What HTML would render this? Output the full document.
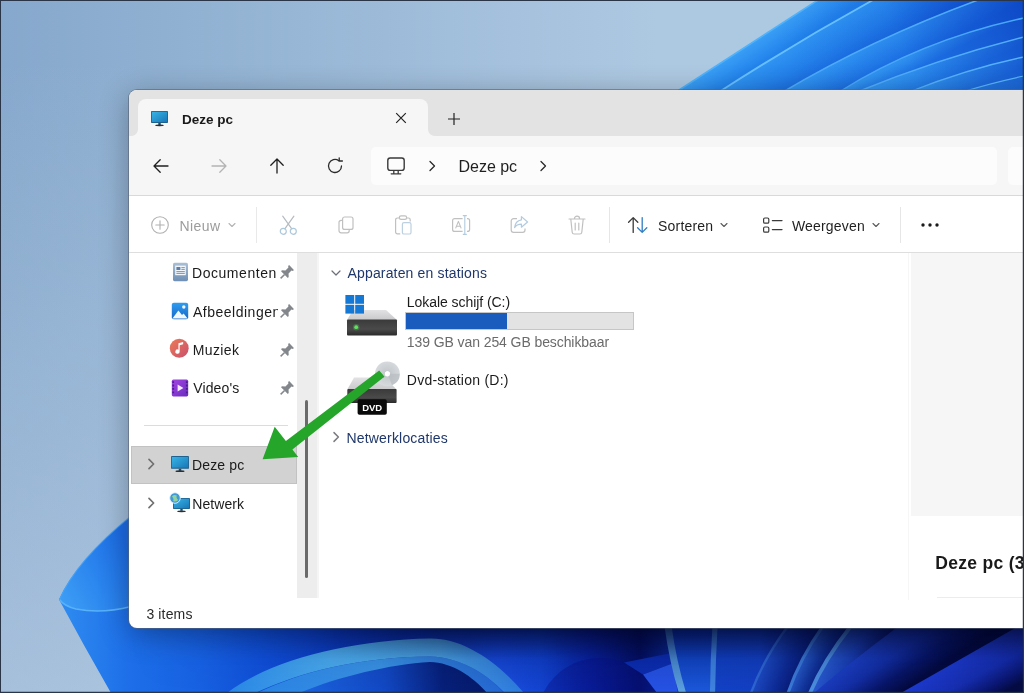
<!DOCTYPE html>
<html lang="nl">
<head>
<meta charset="utf-8">
<title>Deze pc</title>
<style>
html,body{margin:0;padding:0;}
body{width:1024px;height:693px;overflow:hidden;position:relative;background:#8fb0d2;font-family:"Liberation Sans",sans-serif;color:#1b1b1b;}
.abs{position:absolute;}
#wall{position:absolute;left:0;top:0;width:1024px;height:693px;}
#frame{position:absolute;left:0;top:0;width:1024px;height:693px;box-sizing:border-box;border:1px solid #2a3548;box-shadow:inset -1px -1px 0 rgba(30,40,60,.22);z-index:50;pointer-events:none;}
#win{position:absolute;left:129px;top:90px;width:920px;height:538px;background:#fff;border-radius:8px;overflow:hidden;box-shadow:0 0 0 1px rgba(90,100,115,.6),0 6px 30px rgba(0,0,10,.32);}
#titlebar{position:absolute;left:0;top:0;width:100%;height:46px;background:#e3e3e3;}
#tab{position:absolute;left:9px;top:9px;width:290px;height:39px;background:#f6f6f6;border-radius:8px 8px 0 0;}
#tab:before,#tab:after{content:"";position:absolute;bottom:2px;width:7px;height:7px;}
#tab:before{left:-7px;background:radial-gradient(circle at 0 0,rgba(246,246,246,0) 6.5px,#f6f6f6 7.5px);}
#tab:after{right:-7px;background:radial-gradient(circle at 100% 0,rgba(246,246,246,0) 6.5px,#f6f6f6 7.5px);}
#nav{position:absolute;left:0;top:46px;width:100%;height:59px;background:#f6f6f6;}
#addr{position:absolute;left:242px;top:57px;width:626px;height:38px;background:#fcfcfc;border-radius:5px;}
#search{position:absolute;left:879px;top:57px;width:60px;height:38px;background:#fcfcfc;border-radius:5px;}
#tool{position:absolute;left:0;top:105px;width:100%;height:58px;background:#fff;border-top:1px solid #d9d9d9;border-bottom:1px solid #dedede;box-sizing:border-box;}
#c{position:absolute;left:-129px;top:-90px;width:1024px;height:693px;will-change:transform;}
.t{position:absolute;white-space:nowrap;line-height:1;transform-origin:0 50%;}
</style>
</head>
<body>
<svg id="wall" width="1024" height="693" viewBox="0 0 1024 693">
<defs>
<linearGradient id="sky" x1="0" y1="0" x2="1" y2="0">
<stop offset="0" stop-color="#86a8cc"/><stop offset="0.3" stop-color="#98b7d6"/><stop offset="0.5" stop-color="#a5c1dd"/><stop offset="0.64" stop-color="#adc8e1"/><stop offset="1" stop-color="#adc8e1"/>
</linearGradient>
<linearGradient id="skyv" x1="0" y1="0" x2="0" y2="1">
<stop offset="0" stop-color="#7fa2c8" stop-opacity="0"/><stop offset="1" stop-color="#9fb6cc" stop-opacity="0.55"/>
</linearGradient>
<linearGradient id="leftv" gradientUnits="userSpaceOnUse" x1="0" y1="60" x2="0" y2="693">
<stop offset="0" stop-color="#c4d6ea" stop-opacity="0"/><stop offset="0.6" stop-color="#c4d6ea" stop-opacity="0.3"/><stop offset="1" stop-color="#c4d6ea" stop-opacity="0.52"/>
</linearGradient>
<linearGradient id="lp1" gradientUnits="userSpaceOnUse" x1="62" y1="598" x2="135" y2="560"><stop offset="0" stop-color="#3c9cf4"/><stop offset="0.5" stop-color="#2a84ee"/><stop offset="1" stop-color="#1d6ce4"/></linearGradient>
<linearGradient id="lp2" gradientUnits="userSpaceOnUse" x1="70" y1="606" x2="135" y2="690"><stop offset="0" stop-color="#2e8af0"/><stop offset="0.5" stop-color="#2074e6"/><stop offset="1" stop-color="#1a64de"/></linearGradient>
<linearGradient id="bot" gradientUnits="userSpaceOnUse" x1="59" y1="0" x2="1024" y2="0"><stop offset="0.0" stop-color="#2f8cf0"/><stop offset="0.0736" stop-color="#1d6ee8"/><stop offset="0.1461" stop-color="#1761e2"/><stop offset="0.2083" stop-color="#104fd6"/><stop offset="0.3016" stop-color="#0b38bc"/><stop offset="0.3948" stop-color="#0930a8"/><stop offset="0.457" stop-color="#0f3ed0"/><stop offset="0.4984" stop-color="#1040cc"/><stop offset="0.5503" stop-color="#0a22a0"/><stop offset="0.6021" stop-color="#050f62"/><stop offset="0.6311" stop-color="#0a2690"/><stop offset="0.6642" stop-color="#1243c8"/><stop offset="0.7264" stop-color="#1340c4"/><stop offset="0.7575" stop-color="#0a2590"/><stop offset="1.0" stop-color="#061a70"/></linearGradient>

<linearGradient id="botv" gradientUnits="userSpaceOnUse" x1="0" y1="626" x2="0" y2="693"><stop offset="0" stop-color="#01062e" stop-opacity="0.7"/><stop offset="0.5" stop-color="#01062e" stop-opacity="0.12"/><stop offset="1" stop-color="#01062e" stop-opacity="0"/></linearGradient>
<linearGradient id="botvm" gradientUnits="userSpaceOnUse" x1="129" y1="0" x2="1024" y2="0"><stop offset="0" stop-color="#fff" stop-opacity="0"/><stop offset="0.2" stop-color="#fff" stop-opacity="0.35"/><stop offset="0.38" stop-color="#fff" stop-opacity="1"/><stop offset="1" stop-color="#fff" stop-opacity="1"/></linearGradient>
<mask id="mbv"><rect x="0" y="600" width="1024" height="93" fill="url(#botvm)"/></mask>
<linearGradient id="arc1" gradientUnits="userSpaceOnUse" x1="229" y1="0" x2="523" y2="0"><stop offset="0" stop-color="#2a88e6"/><stop offset="0.35" stop-color="#49a8ea"/><stop offset="0.72" stop-color="#4ba4e6"/><stop offset="1" stop-color="#2c7ade"/></linearGradient>
<linearGradient id="arc2" gradientUnits="userSpaceOnUse" x1="257" y1="0" x2="504" y2="0"><stop offset="0" stop-color="#2a84e4"/><stop offset="0.5" stop-color="#3a92e4"/><stop offset="1" stop-color="#2468d4"/></linearGradient>
<linearGradient id="arc3" gradientUnits="userSpaceOnUse" x1="300" y1="0" x2="490" y2="0"><stop offset="0" stop-color="#1b64de"/><stop offset="0.45" stop-color="#1248c4"/><stop offset="0.75" stop-color="#07207a"/><stop offset="1" stop-color="#061a6a"/></linearGradient>
<radialGradient id="arcglow" gradientUnits="userSpaceOnUse" cx="475" cy="705" r="105"><stop offset="0" stop-color="#2a66f0" stop-opacity="0.9"/><stop offset="0.5" stop-color="#1c50e0" stop-opacity="0.55"/><stop offset="1" stop-color="#1040d0" stop-opacity="0"/></radialGradient>
<linearGradient id="vp" gradientUnits="userSpaceOnUse" x1="0" y1="628" x2="0" y2="693"><stop offset="0" stop-color="#0c36b8"/><stop offset="1" stop-color="#1b5adc"/></linearGradient>
<linearGradient id="vl1" gradientUnits="userSpaceOnUse" x1="0" y1="628" x2="0" y2="693"><stop offset="0" stop-color="#3a76c8"/><stop offset="1" stop-color="#5ea4e2"/></linearGradient>
<linearGradient id="fa" gradientUnits="userSpaceOnUse" x1="765" y1="655" x2="800" y2="672"><stop offset="0" stop-color="#1f50cc"/><stop offset="0.6" stop-color="#0e2c98"/><stop offset="1" stop-color="#071a74"/></linearGradient>
<linearGradient id="fb" gradientUnits="userSpaceOnUse" x1="802" y1="655" x2="826" y2="668"><stop offset="0" stop-color="#2c64d4"/><stop offset="0.6" stop-color="#12369e"/><stop offset="1" stop-color="#081e7c"/></linearGradient>
<linearGradient id="fc" gradientUnits="userSpaceOnUse" x1="828" y1="655" x2="866" y2="676"><stop offset="0" stop-color="#2a5ed2"/><stop offset="0.5" stop-color="#1a40b8"/><stop offset="1" stop-color="#0a1a70"/></linearGradient>
<linearGradient id="fd" gradientUnits="userSpaceOnUse" x1="864" y1="653.6" x2="892.6" y2="696.8"><stop offset="0" stop-color="#1c40c6"/><stop offset="0.35" stop-color="#1430a8"/><stop offset="0.7" stop-color="#08166a"/><stop offset="1" stop-color="#040a40"/></linearGradient>
<linearGradient id="fe" gradientUnits="userSpaceOnUse" x1="960" y1="660" x2="984" y2="703"><stop offset="0" stop-color="#1d3ace"/><stop offset="0.45" stop-color="#162eb0"/><stop offset="0.8" stop-color="#0a1670"/><stop offset="1" stop-color="#050c44"/></linearGradient>
<linearGradient id="p1" gradientUnits="userSpaceOnUse" x1="728.6" y1="57.3" x2="742" y2="78"><stop offset="0" stop-color="#3a9ff5"/><stop offset="0.5" stop-color="#2d90f1"/><stop offset="1" stop-color="#207fe9"/></linearGradient><linearGradient id="p2" gradientUnits="userSpaceOnUse" x1="800" y1="42" x2="824" y2="84"><stop offset="0" stop-color="#3095f3"/><stop offset="0.45" stop-color="#2380ea"/><stop offset="1" stop-color="#155fd8"/></linearGradient><linearGradient id="p3" gradientUnits="userSpaceOnUse" x1="870" y1="44.6" x2="884" y2="72"><stop offset="0" stop-color="#3298f4"/><stop offset="0.5" stop-color="#2683ec"/><stop offset="1" stop-color="#1a6de2"/></linearGradient><linearGradient id="p4" gradientUnits="userSpaceOnUse" x1="900" y1="62" x2="906" y2="74"><stop offset="0" stop-color="#3399f4"/><stop offset="1" stop-color="#2079e8"/></linearGradient><linearGradient id="p5" gradientUnits="userSpaceOnUse" x1="940" y1="60" x2="948" y2="78"><stop offset="0" stop-color="#349bf5"/><stop offset="1" stop-color="#2380ea"/></linearGradient><linearGradient id="p6" gradientUnits="userSpaceOnUse" x1="973" y1="69" x2="979" y2="85"><stop offset="0" stop-color="#359df5"/><stop offset="1" stop-color="#2785ec"/></linearGradient><linearGradient id="plen" gradientUnits="userSpaceOnUse" x1="800" y1="95" x2="1030" y2="-5"><stop offset="0" stop-color="#0a3fc4" stop-opacity="0"/><stop offset="0.45" stop-color="#0a3fc4" stop-opacity="0.12"/><stop offset="0.8" stop-color="#0a3cc0" stop-opacity="0.5"/><stop offset="1" stop-color="#0838b8" stop-opacity="0.72"/></linearGradient>
</defs>
<rect width="1024" height="693" fill="url(#sky)"/>
<rect x="0" y="60" width="140" height="633" fill="url(#leftv)"/>
<!-- top-right petals -->
<path d="M676 92 Q745 47 818 0 L1024 0 L1024 92 Z" fill="url(#p1)"/>
<path d="M719 92 Q795 43 873 0 L1024 0 L1024 92 Z" fill="url(#p2)"/>
<path d="M783 92 Q870 40 978 0 L1024 0 L1024 92 Z" fill="url(#p3)"/>
<path d="M839 92 Q922 40 1024 18 L1024 92 Z" fill="url(#p4)"/>
<path d="M857 92 Q940 58 1024 37 L1024 92 Z" fill="url(#p5)"/>
<path d="M909 92 Q970 68 1024 57 L1024 92 Z" fill="url(#p6)"/>
<path d="M962 92 Q995 82 1024 76 L1024 92 Z" fill="#3097f3"/>
<path d="M676 92 Q745 47 818 0 L1024 0 L1024 92 Z" fill="url(#plen)"/>
<path d="M676 92 Q745 47 818 0" fill="none" stroke="#4fb2fb" stroke-width="1.6"/>
<path d="M719 92 Q795 43 873 0" fill="none" stroke="#66c0ff" stroke-width="1.8"/>
<path d="M783 92 Q870 40 978 0" fill="none" stroke="#4eacfb" stroke-width="1.5"/>
<path d="M839 92 Q922 40 1024 18" fill="none" stroke="#4aa8fa" stroke-width="1.4"/>
<path d="M857 92 Q940 58 1024 37" fill="none" stroke="#52aefb" stroke-width="1.4"/>
<path d="M909 92 Q970 68 1024 57" fill="none" stroke="#56b2fc" stroke-width="1.3"/>
<path d="M962 92 Q995 82 1024 76" fill="none" stroke="#5ab6fc" stroke-width="1.2"/>
<!-- bottom base -->
<path d="M131 516 Q76.6 560.2 59 599.5 Q84 646 111 693 L1024 693 L1024 600 L131 600 Z" fill="url(#bot)"/>
<!-- left petal inner -->
<path d="M131 516 Q76.6 560.2 59 599.5 Q64 606 76 609 Q102 614 131 606.5 Z" fill="url(#lp1)"/>
<path d="M59.5 599.5 Q64 606 76 609 Q102 614 131 606.5" fill="none" stroke="#58b2fa" stroke-width="1.6"/>
<path d="M131 516 Q76.6 560.2 59.5 599.5" fill="none" stroke="#4aa6f8" stroke-width="1.1" opacity="0.7"/>
<!-- glow right of arc -->
<rect x="380" y="626" width="260" height="67" fill="url(#arcglow)"/>
<!-- arc bands -->
<path d="M257 693 C300 672 360 657 430 656.5 C458 657 485 672 504 693 Z" fill="url(#arc2)"/>
<path d="M299 693 C340 676 390 664.5 430 662 C452 662.5 472 676 487 693 Z" fill="url(#arc3)"/>
<path d="M227 693 C270 660 350 640 430 638.5 C462 638 496 660 524 693 L505 693 C485 672 458 657 430 656.5 C360 657 300 672 255 693 Z" fill="url(#arc1)"/>
<!-- patches -->
<circle cx="600" cy="722" r="64" fill="#07128a" opacity="0.4"/>
<path d="M624 662.5 L669 653.5 L672 664 L643 674.5 Z" fill="#0d2eb4"/>
<path d="M643 674.5 L672.5 663.5 L678 693 L657 693 Z" fill="#2653e6"/>
<!-- vertical petals -->
<path d="M669 626 L713 626 L710 693 L683 693 Z" fill="url(#vp)"/>
<path d="M668 626 Q673 662 682.5 693" fill="none" stroke="url(#vl1)" stroke-width="7"/>
<path d="M715 626 Q713 660 712.5 693" fill="none" stroke="#3f84e2" stroke-width="5.2"/>
<!-- fan -->
<path d="M788 626 Q764 658 751 693 L790 693 Q800 658 823 626 Z" fill="url(#fa)"/>
<path d="M788 626 Q764 658 751 693" fill="none" stroke="#2e66d4" stroke-width="2.4"/>
<path d="M823 626 Q800 658 788 693 L812 693 Q824 660 851 626 Z" fill="url(#fb)"/>
<path d="M823 626 Q800 658 788 693" fill="none" stroke="#3b7ad8" stroke-width="3"/>
<path d="M851 626 Q824 660 810 693 L816 693 Q850 662 899 626 Z" fill="url(#fc)"/>
<path d="M851 626 Q824 660 810 693" fill="none" stroke="#4b8ee0" stroke-width="3.8"/>
<path d="M899 626 Q850 662 814 693 L903 693 L1019 626 Z" fill="url(#fd)"/>
<path d="M901 693 L1019 626 L1024 626 L1024 693 Z" fill="url(#fe)"/>
<!-- top darkening -->
<rect x="129" y="626" width="895" height="67" fill="url(#botv)" mask="url(#mbv)"/>
</svg>

<div id="win">
  <div id="titlebar"></div>
  <div id="tab"></div>
  <div id="nav"></div>
  <div id="addr"></div>
  <div id="search"></div>
  <div id="tool"></div>
<div id="c">
<!-- TAB -->
<svg class="abs" style="left:150px;top:110px" width="19" height="17" viewBox="0 0 19 17"><defs><linearGradient id="mon" x1="0" y1="0" x2="1" y2="1"><stop offset="0" stop-color="#38b4e6"/><stop offset="1" stop-color="#1878b8"/></linearGradient></defs><rect x="1" y="1" width="17" height="12" rx="0.8" fill="#1d5f8c"/><rect x="1.8" y="1.8" width="15.4" height="10.2" fill="url(#mon)"/><rect x="8.3" y="13" width="2.4" height="2" fill="#2a4a5e"/><ellipse cx="9.5" cy="15.3" rx="4.3" ry="0.9" fill="#22323c"/></svg>
<span class="t" id="t_tab" style="left:181.9px;top:112.77px;font-size:13.5px;font-weight:bold;color:#1a1a1a;letter-spacing:-0.002px">Deze pc</span>
<svg class="abs" style="left:395px;top:112px" width="12" height="12" viewBox="0 0 12 12"><path d="M1.2 1.2 L10.8 10.8 M10.8 1.2 L1.2 10.8" stroke="#222" stroke-width="1.2" fill="none"/></svg>
<svg class="abs" style="left:447px;top:112px" width="14" height="14" viewBox="0 0 14 14"><path d="M7 1 V13 M1 7 H13" stroke="#222" stroke-width="1.2" fill="none"/></svg>
<!-- NAV -->
<svg class="abs" style="left:152px;top:158px" width="18" height="16" viewBox="0 0 18 16"><path d="M16 8 H2.2 M8.2 1.8 L2 8 L8.2 14.2" stroke="#1f1f1f" stroke-width="1.3" fill="none" stroke-linecap="round" stroke-linejoin="round"/></svg>
<svg class="abs" style="left:210px;top:158px" width="18" height="16" viewBox="0 0 18 16"><path d="M2 8 H15.8 M9.8 1.8 L16 8 L9.8 14.2" stroke="#b4b4b4" stroke-width="1.3" fill="none" stroke-linecap="round" stroke-linejoin="round"/></svg>
<svg class="abs" style="left:269px;top:157px" width="16" height="18" viewBox="0 0 16 18"><path d="M8 16 V2.2 M1.8 8.2 L8 2 L14.2 8.2" stroke="#1f1f1f" stroke-width="1.3" fill="none" stroke-linecap="round" stroke-linejoin="round"/></svg>
<svg class="abs" style="left:326px;top:157px" width="18" height="18" viewBox="0 0 18 18"><path d="M15.5 9 A6.5 6.5 0 1 1 12.8 3.7" stroke="#2a2a2a" stroke-width="1.3" fill="none" stroke-linecap="round"/><path d="M12.6 1.2 V4.4 H15.8" stroke="#2a2a2a" stroke-width="1.3" fill="none" stroke-linecap="round" stroke-linejoin="round" transform="translate(0.6,-0.4)"/></svg>
<svg class="abs" style="left:386px;top:156px" width="20" height="20" viewBox="0 0 20 20"><rect x="1.8" y="2" width="16.4" height="12.4" rx="2.4" stroke="#3a3a3a" stroke-width="1.4" fill="none"/><path d="M7.8 14.6 V17.6 M12.2 14.6 V17.6 M5.2 17.8 H14.8" stroke="#3a3a3a" stroke-width="1.3" fill="none" stroke-linecap="round"/></svg>
<svg class="abs" style="left:427px;top:160px" width="10" height="12" viewBox="0 0 10 12"><path d="M3 1.5 L7.5 6 L3 10.5" stroke="#2a2a2a" stroke-width="1.3" fill="none" stroke-linecap="round" stroke-linejoin="round"/></svg>
<span class="t" id="t_bc" style="left:458.5px;top:158.66px;font-size:16px;color:#1f1f1f;letter-spacing:-0.016px">Deze pc</span>
<svg class="abs" style="left:538px;top:160px" width="10" height="12" viewBox="0 0 10 12"><path d="M3 1.5 L7.5 6 L3 10.5" stroke="#2a2a2a" stroke-width="1.3" fill="none" stroke-linecap="round" stroke-linejoin="round"/></svg>
<!-- TOOLBAR -->
<svg class="abs" style="left:149.6px;top:214.5px" width="20" height="20" viewBox="0 0 20 20"><circle cx="10" cy="10" r="8.3" stroke="#b0b0b0" stroke-width="1.1" fill="none"/><path d="M10 5.8 V14.2 M5.8 10 H14.2" stroke="#b0b0b0" stroke-width="1.1" fill="none" stroke-linecap="round"/></svg>
<span class="t" id="t_nieuw" style="left:179.6px;top:218.95px;font-size:14px;color:#9c9c9c;letter-spacing:0.377px">Nieuw</span>
<svg class="abs" style="left:227px;top:221px" width="10" height="8" viewBox="0 0 10 8"><path d="M2 2.5 L5 5.5 L8 2.5" stroke="#b4b4b4" stroke-width="1.1" fill="none" stroke-linecap="round" stroke-linejoin="round"/></svg>
<div class="abs" style="left:256px;top:207px;width:1px;height:36px;background:#e9e9e9"></div>
<!-- cut -->
<svg class="abs" style="left:279px;top:214px" width="20" height="22" viewBox="0 0 20 22"><path d="M3.7 2.2 L12.8 14.8 M14.9 2.2 L5.8 14.8" stroke="#b6bbc0" stroke-width="1.2" fill="none" stroke-linecap="round"/><circle cx="4.3" cy="17.3" r="3" stroke="#aec8dc" stroke-width="1.2" fill="none"/><circle cx="14.3" cy="17.3" r="3" stroke="#aec8dc" stroke-width="1.2" fill="none"/></svg>
<!-- copy -->
<svg class="abs" style="left:336px;top:215px" width="20" height="20" viewBox="0 0 20 20"><rect x="6.6" y="2" width="10.4" height="12.4" rx="2" stroke="#c0c0c0" stroke-width="1.2" fill="none"/><path d="M6.4 5.4 H5 A2 2 0 0 0 3 7.4 V15.6 A2.2 2.2 0 0 0 5.2 17.8 H11.2 A2 2 0 0 0 13.2 15.8 V14.6" stroke="#c0c0c0" stroke-width="1.2" fill="none"/></svg>
<!-- paste -->
<svg class="abs" style="left:393px;top:214px" width="20" height="22" viewBox="0 0 20 22"><path d="M6.2 4 H4.4 A1.8 1.8 0 0 0 2.6 5.8 V18 A1.8 1.8 0 0 0 4.4 19.8 H7.2" stroke="#c0c0c0" stroke-width="1.2" fill="none"/><path d="M13.6 4 H15.4 A1.8 1.8 0 0 1 17.2 5.8 V7.4" stroke="#c0c0c0" stroke-width="1.2" fill="none"/><rect x="6.4" y="1.8" width="7.2" height="3.6" rx="1.6" stroke="#c0c0c0" stroke-width="1.2" fill="none"/><rect x="9.4" y="8.6" width="8.6" height="11.4" rx="1.6" stroke="#bcd0e0" stroke-width="1.2" fill="none"/></svg>
<!-- rename -->
<svg class="abs" style="left:450px;top:214px" width="22" height="22" viewBox="0 0 22 22"><path d="M12.6 4.6 H4.6 A2 2 0 0 0 2.6 6.6 V15.4 A2 2 0 0 0 4.6 17.4 H12.6 M17 4.6 H17.6 A2 2 0 0 1 19.6 6.6 V15.4 A2 2 0 0 1 17.6 17.4 H17" stroke="#c0c0c0" stroke-width="1.2" fill="none"/><path d="M14.8 1.6 V20.4 M12.8 1.6 H16.8 M12.8 20.4 H16.8" stroke="#b2cbe0" stroke-width="1.1" fill="none"/><path d="M5.6 14.4 L8.4 7.4 L11.2 14.4 M6.5 12.2 H10.3" stroke="#c0c0c0" stroke-width="1.1" fill="none" stroke-linejoin="round"/></svg>
<!-- share -->
<svg class="abs" style="left:508px;top:214px" width="22" height="22" viewBox="0 0 22 22"><path d="M9 4.6 H5.6 A2.4 2.4 0 0 0 3.2 7 V16 A2.4 2.4 0 0 0 5.6 18.4 H14.6 A2.4 2.4 0 0 0 17 16 V14.6" stroke="#c0c0c0" stroke-width="1.2" fill="none"/><path d="M13.4 2.6 L19.6 8 L13.4 13.2 V10.2 C10 10.2 8 11.4 6.6 13.6 C7 9.6 9.4 6.4 13.4 5.8 Z" stroke="#b2cbe0" stroke-width="1.2" fill="none" stroke-linejoin="round"/></svg>
<!-- delete -->
<svg class="abs" style="left:567px;top:214px" width="20" height="22" viewBox="0 0 20 22"><path d="M2 5 H18 M7.4 4.8 A2.6 2.6 0 0 1 12.6 4.8 M3.8 5.2 L5.2 18.2 A2 2 0 0 0 7.2 20 H12.8 A2 2 0 0 0 14.8 18.2 L16.2 5.2 M8.2 9 V16 M11.8 9 V16" stroke="#c0c0c0" stroke-width="1.2" fill="none" stroke-linecap="round"/></svg>
<div class="abs" style="left:609px;top:207px;width:1px;height:36px;background:#e6e6e6"></div>
<!-- sort -->
<svg class="abs" style="left:627px;top:215px" width="22" height="20" viewBox="0 0 22 20"><path d="M6.2 17.4 V2.8 M1.6 7.2 L6.2 2.6 L10.8 7.2" stroke="#3a3a3a" stroke-width="1.3" fill="none" stroke-linecap="round" stroke-linejoin="round"/><path d="M15.2 2.6 V17.2 M10.6 12.8 L15.2 17.4 L19.8 12.8" stroke="#2f7dc4" stroke-width="1.3" fill="none" stroke-linecap="round" stroke-linejoin="round"/></svg>
<span class="t" id="t_sort" style="left:658.1px;top:219.05px;font-size:14px;color:#1f1f1f;letter-spacing:0.184px">Sorteren</span>
<svg class="abs" style="left:719px;top:221px" width="10" height="8" viewBox="0 0 10 8"><path d="M2 2.5 L5 5.5 L8 2.5" stroke="#5a5a5a" stroke-width="1.1" fill="none" stroke-linecap="round" stroke-linejoin="round"/></svg>
<!-- view -->
<svg class="abs" style="left:762px;top:215px" width="22" height="20" viewBox="0 0 22 20"><rect x="1.6" y="3" width="5.2" height="5.2" rx="1.3" stroke="#3a3a3a" stroke-width="1.2" fill="none"/><rect x="1.6" y="12" width="5.2" height="5.2" rx="1.3" stroke="#3a3a3a" stroke-width="1.2" fill="none"/><path d="M10.4 5.6 H20 M10.4 14.6 H20" stroke="#3a3a3a" stroke-width="1.3" fill="none" stroke-linecap="round"/></svg>
<span class="t" id="t_view" style="left:791.9px;top:219.05px;font-size:14px;color:#1f1f1f;letter-spacing:0.193px">Weergeven</span>
<svg class="abs" style="left:871px;top:221px" width="10" height="8" viewBox="0 0 10 8"><path d="M2 2.5 L5 5.5 L8 2.5" stroke="#5a5a5a" stroke-width="1.1" fill="none" stroke-linecap="round" stroke-linejoin="round"/></svg>
<div class="abs" style="left:900px;top:207px;width:1px;height:36px;background:#e6e6e6"></div>
<svg class="abs" style="left:919px;top:221px" width="22" height="8" viewBox="0 0 22 8"><circle cx="4" cy="4" r="1.7" fill="#1b1b1b"/><circle cx="11" cy="4" r="1.7" fill="#1b1b1b"/><circle cx="18" cy="4" r="1.7" fill="#1b1b1b"/></svg>

<!-- SIDEBAR -->
<div class="abs" style="left:297px;top:253px;width:20px;height:345px;background:#ededed;border-right:2px solid #f5f5f5"></div>
<div class="abs" style="left:305px;top:400px;width:3px;height:178px;background:#6a6a6a;border-radius:2px"></div>
<!-- documents icon -->
<svg class="abs" style="left:172px;top:262px" width="17" height="20" viewBox="0 0 17 20"><defs><linearGradient id="doc" x1="0" y1="0" x2="0" y2="1"><stop offset="0" stop-color="#a9bfd6"/><stop offset="1" stop-color="#6f8fb4"/></linearGradient></defs><rect x="1" y="0.8" width="15" height="18.4" rx="1.6" fill="url(#doc)"/><rect x="3.2" y="3.6" width="10.6" height="9.6" fill="#f3f7fb"/><rect x="4.4" y="5" width="4" height="3" fill="#5a7ea8"/><path d="M9.4 5.6 H12.8 M9.4 7.4 H12.8 M4.4 9.6 H12.8 M4.4 11.4 H12.8" stroke="#6a89ad" stroke-width="0.9"/></svg>
<span class="t" id="t_doc" style="left:192.0px;top:265.95px;font-size:14px;letter-spacing:0.545px">Documenten</span>
<svg class="abs" style="left:278px;top:265px" width="16" height="16" viewBox="0 0 16 16"><g transform="rotate(45 8 8)"><path d="M4.6 0.2 H11.4 V1.6 L10.2 2.4 V6.6 L12.8 9 V10.2 H3.2 V9 L5.8 6.6 V2.4 L4.6 1.6 Z" fill="#83878c"/><path d="M8 10 V15.6" stroke="#83878c" stroke-width="1.5"/></g></svg>
<!-- pictures icon -->
<svg class="abs" style="left:171px;top:302px" width="18" height="18" viewBox="0 0 18 18"><defs><linearGradient id="pic" x1="0" y1="0" x2="0" y2="1"><stop offset="0" stop-color="#2f9cf0"/><stop offset="1" stop-color="#1668c8"/></linearGradient></defs><rect x="0.8" y="0.8" width="16.4" height="16.4" rx="2" fill="url(#pic)"/><path d="M1.4 16.6 L7.4 8.4 L11 13 L12.6 11.4 L16.6 16.6 Z" fill="#f2f8ff"/><circle cx="12.8" cy="5" r="1.7" fill="#f2f8ff"/></svg>
<span class="t" id="t_afb" style="left:193.0px;top:304.65px;font-size:14px;width:84.5px;height:20px;overflow:hidden;letter-spacing:0.5px">Afbeeldingen</span>
<svg class="abs" style="left:278px;top:304px" width="16" height="16" viewBox="0 0 16 16"><g transform="rotate(45 8 8)"><path d="M4.6 0.2 H11.4 V1.6 L10.2 2.4 V6.6 L12.8 9 V10.2 H3.2 V9 L5.8 6.6 V2.4 L4.6 1.6 Z" fill="#83878c"/><path d="M8 10 V15.6" stroke="#83878c" stroke-width="1.5"/></g></svg>
<!-- music icon -->
<svg class="abs" style="left:169.2px;top:338.4px" width="20.5" height="20.5" viewBox="0 0 20 20"><defs><linearGradient id="mus" x1="0" y1="0" x2="1" y2="1"><stop offset="0" stop-color="#ec7a55"/><stop offset="1" stop-color="#c9506e"/></linearGradient></defs><circle cx="10" cy="10" r="9.2" fill="url(#mus)"/><path d="M9.2 5 L13.8 4 V6.2 L10.4 7 V13.2 A2.1 2.1 0 1 1 9.2 11.4 Z" fill="#fff"/></svg>
<span class="t" id="t_muz" style="left:192.7px;top:342.7px;font-size:14px;letter-spacing:0.371px">Muziek</span>
<svg class="abs" style="left:278px;top:343px" width="16" height="16" viewBox="0 0 16 16"><g transform="rotate(45 8 8)"><path d="M4.6 0.2 H11.4 V1.6 L10.2 2.4 V6.6 L12.8 9 V10.2 H3.2 V9 L5.8 6.6 V2.4 L4.6 1.6 Z" fill="#83878c"/><path d="M8 10 V15.6" stroke="#83878c" stroke-width="1.5"/></g></svg>
<!-- video icon -->
<svg class="abs" style="left:171px;top:379px" width="18" height="18" viewBox="0 0 18 18"><defs><linearGradient id="vid" x1="0" y1="0" x2="1" y2="1"><stop offset="0" stop-color="#a347e0"/><stop offset="1" stop-color="#6a2bc0"/></linearGradient></defs><rect x="0.8" y="0.6" width="16.4" height="16.8" rx="1.6" fill="url(#vid)"/><path d="M2.2 2.2 V15.8 M15.8 2.2 V15.8" stroke="#4a1a92" stroke-width="1.8" stroke-dasharray="1.8 1.6"/><path d="M6.6 5.4 L12.4 9 L6.6 12.6 Z" fill="#f4eaff"/></svg>
<span class="t" id="t_vid" style="left:193.3px;top:381.25px;font-size:14px;letter-spacing:0.112px">Video's</span>
<svg class="abs" style="left:278px;top:381px" width="16" height="16" viewBox="0 0 16 16"><g transform="rotate(45 8 8)"><path d="M4.6 0.2 H11.4 V1.6 L10.2 2.4 V6.6 L12.8 9 V10.2 H3.2 V9 L5.8 6.6 V2.4 L4.6 1.6 Z" fill="#83878c"/><path d="M8 10 V15.6" stroke="#83878c" stroke-width="1.5"/></g></svg>
<div class="abs" style="left:144px;top:425px;width:144px;height:1px;background:#dcdcdc"></div>
<div class="abs" style="left:131px;top:446px;width:166px;height:38px;background:#d2d2d2;border:1px solid #c2c2c2;box-sizing:border-box"></div>
<svg class="abs" style="left:146px;top:458.4px" width="10" height="12" viewBox="0 0 10 12"><path d="M3 1.4 L7.6 6 L3 10.6" stroke="#707070" stroke-width="1.7" fill="none" stroke-linecap="round" stroke-linejoin="round"/></svg>
<svg class="abs" style="left:170px;top:455px" width="20" height="18" viewBox="0 0 19 17"><rect x="1" y="1" width="17" height="12" rx="0.8" fill="#1d5f8c"/><rect x="1.8" y="1.8" width="15.4" height="10.2" fill="url(#mon)"/><rect x="8.3" y="13" width="2.4" height="2" fill="#2a4a5e"/><ellipse cx="9.5" cy="15.3" rx="4.3" ry="0.9" fill="#22323c"/></svg>
<span class="t" id="t_dpc" style="left:191.9px;top:458.05px;font-size:14px;letter-spacing:0.174px">Deze pc</span>
<svg class="abs" style="left:146px;top:496.6px" width="10" height="12" viewBox="0 0 10 12"><path d="M3 1.4 L7.6 6 L3 10.6" stroke="#707070" stroke-width="1.7" fill="none" stroke-linecap="round" stroke-linejoin="round"/></svg>
<svg class="abs" style="left:169px;top:492px" width="22" height="21" viewBox="0 0 22 21"><rect x="4" y="6" width="17" height="11" rx="0.8" fill="#1d5f8c"/><rect x="4.8" y="6.8" width="15.4" height="9.4" fill="url(#mon)"/><rect x="11.3" y="17" width="2.4" height="1.8" fill="#2a4a5e"/><ellipse cx="12.5" cy="19.3" rx="4.3" ry="0.9" fill="#22323c"/><circle cx="6" cy="6" r="5.3" fill="#3f9ad6" stroke="#e4f2fb" stroke-width="0.9"/><path d="M3 4.2 Q5.4 2 7.8 3.6 Q6.8 6.2 9.2 8 Q6.4 10.6 4.2 9 Q5 6.4 3 4.2Z" fill="#9fdc9a" opacity="0.85"/></svg>
<span class="t" id="t_net" style="left:192.3px;top:496.75px;font-size:14px;letter-spacing:0.076px">Netwerk</span>
<!-- MAIN -->
<svg class="abs" style="left:330px;top:268px" width="12" height="10" viewBox="0 0 12 10"><path d="M2 3 L6 7 L10 3" stroke="#6a6f7a" stroke-width="1.2" fill="none" stroke-linecap="round" stroke-linejoin="round"/></svg>
<span class="t" id="t_app" style="left:347.5px;top:266.45px;font-size:14px;color:#1f376b;letter-spacing:0.16px">Apparaten en stations</span>
<!-- C drive -->
<svg class="abs" style="left:343px;top:293px" width="58" height="46" viewBox="0 0 58 46"><defs><linearGradient id="hd" x1="0" y1="0" x2="0" y2="1"><stop offset="0" stop-color="#3a3a3a"/><stop offset="0.6" stop-color="#4a4a4a"/><stop offset="1" stop-color="#2a2a2a"/></linearGradient><linearGradient id="lid" x1="0" y1="0" x2="0" y2="1"><stop offset="0" stop-color="#e2e2e4"/><stop offset="1" stop-color="#c9c9cc"/></linearGradient></defs><path d="M10 17 H43 L54 27 H4 Z" fill="url(#lid)"/><rect x="4" y="26.5" width="50" height="16" rx="1" fill="url(#hd)"/><circle cx="13.2" cy="34.2" r="1.9" fill="#5fe45f"/><circle cx="13.2" cy="34.2" r="3.2" fill="#5fe45f" opacity="0.25"/><rect x="2.4" y="2" width="8.8" height="8.8" fill="#1478d4"/><rect x="12.2" y="2" width="8.8" height="8.8" fill="#1478d4"/><rect x="2.4" y="11.8" width="8.8" height="8.8" fill="#1478d4"/><rect x="12.2" y="11.8" width="8.8" height="8.8" fill="#1478d4"/></svg>
<span class="t" id="t_c" style="left:406.8px;top:294.8px;font-size:14px;letter-spacing:-0.058px">Lokale schijf (C:)</span>
<div class="abs" style="left:405px;top:312px;width:229px;height:18px;background:#e3e3e3;border:1px solid #c6c6c6;box-sizing:border-box"></div>
<div class="abs" style="left:406px;top:313px;width:101px;height:16px;background:#1a5cbe"></div>
<span class="t" id="t_gb" style="left:406.8px;top:334.55px;font-size:14px;color:#6b6b6b;letter-spacing:-0.086px">139 GB van 254 GB beschikbaar</span>
<!-- DVD -->
<svg class="abs" style="left:343px;top:358px" width="58" height="60" viewBox="0 0 58 60"><defs><radialGradient id="disc" cx="0.5" cy="0.5" r="0.5"><stop offset="0" stop-color="#ffffff"/><stop offset="0.18" stop-color="#f2f4f5"/><stop offset="0.22" stop-color="#c4c9cd"/><stop offset="1" stop-color="#d6dadd"/></radialGradient></defs><path d="M11 19.6 H42 L53.6 31.5 H4.3 Z" fill="url(#lid)"/><circle cx="44.4" cy="15.8" r="12.4" fill="url(#disc)"/><path d="M44.4 15.8 L56.8 15.8 A12.4 12.4 0 0 1 49 27.3 Z" fill="#b4b9be" opacity="0.6"/><circle cx="44.4" cy="15.8" r="2.6" fill="#ffffff" opacity="0.9"/><rect x="4.3" y="31" width="49.3" height="14" rx="1" fill="url(#hd)"/><rect x="14.6" y="41.2" width="29.2" height="15.5" rx="1.8" fill="#0a0a0a"/><text x="29.2" y="52.6" font-family="Liberation Sans, sans-serif" font-size="9.5" font-weight="bold" fill="#fff" text-anchor="middle">DVD</text></svg>
<span class="t" id="t_d" style="left:406.8px;top:372.85px;font-size:14px;letter-spacing:0.243px">Dvd-station (D:)</span>
<svg class="abs" style="left:331px;top:431px" width="10" height="12" viewBox="0 0 10 12"><path d="M3 1.6 L7.4 6 L3 10.4" stroke="#7c7c80" stroke-width="1.5" fill="none" stroke-linecap="round" stroke-linejoin="round"/></svg>
<span class="t" id="t_nl" style="left:346.5px;top:430.9px;font-size:14px;color:#1f376b;letter-spacing:0.178px">Netwerklocaties</span>
<!-- RIGHT PANE -->
<div class="abs" style="left:911px;top:253px;width:114px;height:263px;background:#f6f6f6"></div>
<div class="abs" style="left:908px;top:253px;width:1px;height:347px;background:#f6f6f6"></div>
<span class="t" id="t_rp" style="left:935.3px;top:555.4px;font-size:17.5px;font-weight:bold;color:#1a1a1a;letter-spacing:0.299px">Deze pc (3</span>
<div class="abs" style="left:937px;top:597px;width:90px;height:1px;background:#ececec"></div>
<!-- STATUS -->
<span class="t" id="t_st" style="left:146.4px;top:606.85px;font-size:14px;color:#2a2a2a;letter-spacing:0.146px">3 items</span>
<!-- ARROW -->
<svg class="abs" style="left:240px;top:350px" width="170" height="130" viewBox="240 350 170 130"><path d="M379.2 370.6 L384.5 376.7 L292.4 449.5 L298.2 457 L262.6 459.2 L274.7 426.7 L285.9 441.1 Z" fill="#25a52a"/></svg>
</div>
</div>
<div id="frame"></div>
</body>
</html>
